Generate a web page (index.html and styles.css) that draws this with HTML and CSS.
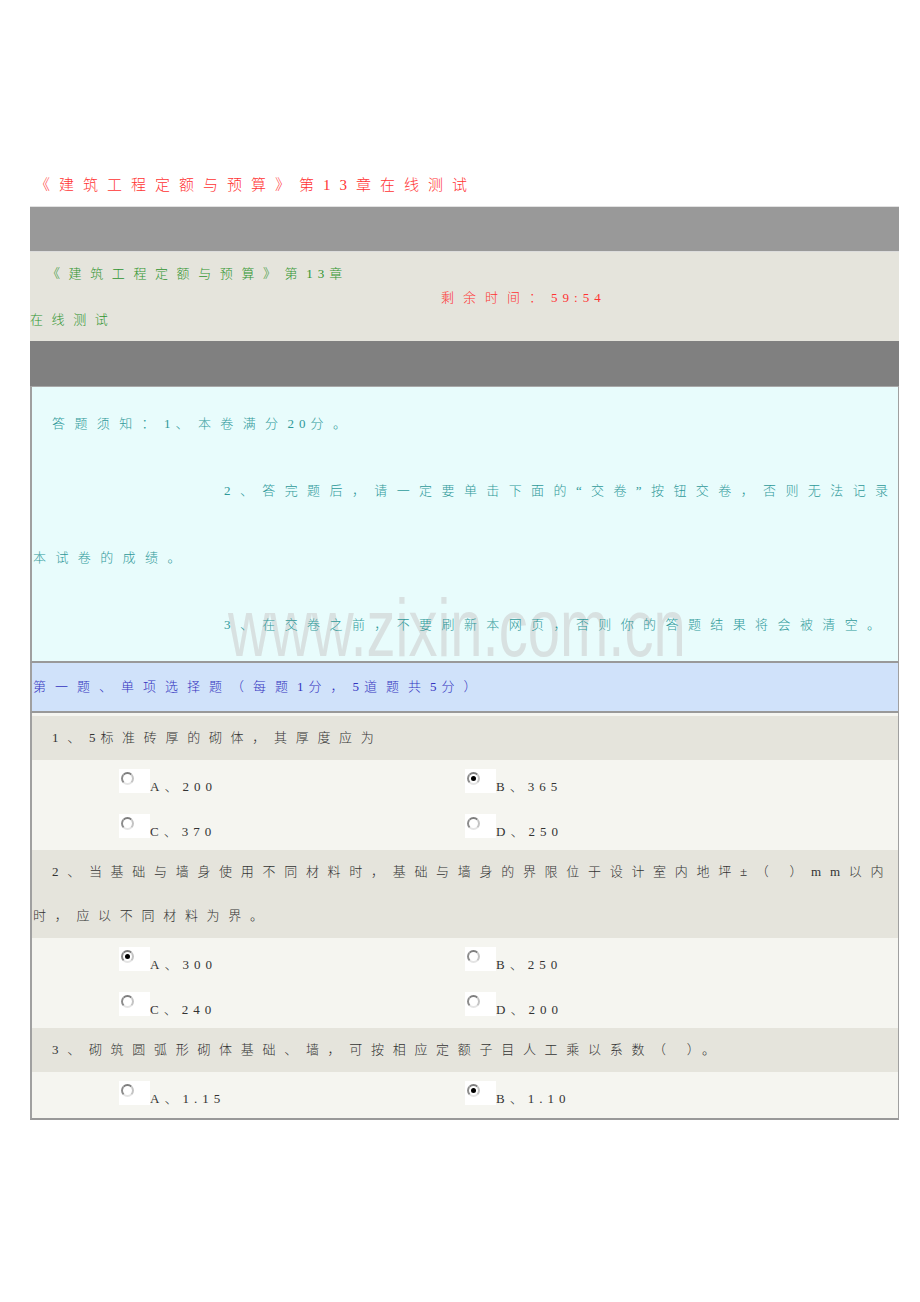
FILE: index.html
```html
<!DOCTYPE html>
<html lang="zh-CN">
<head>
<meta charset="utf-8">
<title>《建筑工程定额与预算》第13章在线测试</title>
<link rel="stylesheet" href="styles.css">
</head>
<body>
<div class="page">
  <h1 class="title">《建筑工程定额与预算》第<span class="tnum">13</span>章在线测试</h1>
  <div class="frame">
    <div class="bar bar-light"></div>
    <div class="head">
      <div class="head-left"><span class="head-indent">《建筑工程定额与预算》第<span class="num">13</span>章</span><br>在线测试</div>
      <div class="timer">剩余时间：<span class="num">59:54</span></div>
    </div>
    <div class="bar bar-dark"></div>
    <div class="notice">
      <div class="watermark" aria-hidden="true">www.zixin.com.cn</div>
      <p class="n1">答题须知：<span class="num">1</span>、本卷满分<span class="num">20</span>分。</p>
      <p class="n2">2、答完题后，请一定要单击下面的“交卷”按钮交卷，否则无法记录<br>本试卷的成绩。</p>
      <p class="n2">3、在交卷之前，不要刷新本网页，否则你的答题结果将会被清空。</p>
    </div>
    <div class="section-head">第一题、单项选择题（每题<span class="num">1</span>分，<span class="num">5</span>道题共<span class="num">5</span>分）</div>
    <div class="questions">
      <div class="stem">1、<span class="num">5</span>标准砖厚的砌体，其厚度应为</div>
      <div class="opts">
        <div class="opt-row">
          <label class="opt"><span class="radio-box"><span class="radio"></span></span><span class="opt-text">A、200</span></label>
          <label class="opt"><span class="radio-box"><span class="radio on"></span></span><span class="opt-text">B、365</span></label>
        </div>
        <div class="opt-row">
          <label class="opt"><span class="radio-box"><span class="radio"></span></span><span class="opt-text">C、370</span></label>
          <label class="opt"><span class="radio-box"><span class="radio"></span></span><span class="opt-text">D、250</span></label>
        </div>
      </div>
      <div class="stem">2、当基础与墙身使用不同材料时，基础与墙身的界限位于设计室内地坪±（ ）mm以内<br>时，应以不同材料为界。</div>
      <div class="opts">
        <div class="opt-row">
          <label class="opt"><span class="radio-box"><span class="radio on"></span></span><span class="opt-text">A、300</span></label>
          <label class="opt"><span class="radio-box"><span class="radio"></span></span><span class="opt-text">B、250</span></label>
        </div>
        <div class="opt-row">
          <label class="opt"><span class="radio-box"><span class="radio"></span></span><span class="opt-text">C、240</span></label>
          <label class="opt"><span class="radio-box"><span class="radio"></span></span><span class="opt-text">D、200</span></label>
        </div>
      </div>
      <div class="stem">3、砌筑圆弧形砌体基础、墙，可按相应定额子目人工乘以系数（ ）。</div>
      <div class="opts">
        <div class="opt-row last">
          <label class="opt"><span class="radio-box"><span class="radio"></span></span><span class="opt-text">A、1.15</span></label>
          <label class="opt"><span class="radio-box"><span class="radio on"></span></span><span class="opt-text">B、1.10</span></label>
        </div>
      </div>
    </div>
  </div>
</div>
</body>
</html>
```

FILE: styles.css
```css
html, body {
  margin: 0;
  padding: 0;
  background: #ffffff;
}

body {
  font-family: "Liberation Serif", "Noto Sans CJK SC", serif;
  font-weight: 300;
  font-size: 13px;
  color: #333333;
}

.page {
  width: 920px;
  padding-top: 175px;
}

.title {
  margin: 0 0 0 35px;
  font-size: 15px;
  line-height: 20px;
  font-weight: 300;
  letter-spacing: 9px;
  color: #ff3333;
  white-space: nowrap;
}

.frame {
  width: 869px;
  margin: 11px 0 0 30px;
  border-top: 1px solid #e2e2e2;
}

.bar {
  height: 44px;
}

.bar-light {
  background: #999999;
  border-bottom: 1px solid #dcdcdc;
}

.bar-dark {
  height: 45px;
  background: #808080;
}

.head {
  height: 89px;
  background: #e5e4dc;
  display: flex;
  align-items: center;
}

.head-left {
  flex: 0 0 411px;
  color: #2f942f;
  line-height: 46px;
  letter-spacing: 8.6px;
  white-space: nowrap;
}

.head-indent {
  padding-left: 17px;
}

.timer {
  color: #ff3333;
  letter-spacing: 9px;
  white-space: nowrap;
}

.num {
  letter-spacing: 5px;
}

.notice {
  position: relative;
  overflow: hidden;
  background: #e8fcfc;
  border-top: 1px solid #a8a8a8;
  border-left: 2px solid #a0a0a0;
  border-right: 1px solid #a0a0a0;
  border-bottom: 2px solid #999999;
  padding: 3px 0 3px 1px;
  color: #2f9999;
  letter-spacing: 9.4px;
}

.notice p {
  position: relative;
  margin: 0;
  line-height: 67px;
  white-space: nowrap;
}

.n1 {
  text-indent: 19px;
}

.n2 {
  text-indent: 191px;
}

.watermark {
  position: absolute;
  left: 196px;
  top: 220px;
  font-family: "Liberation Sans", sans-serif;
  font-size: 58px;
  line-height: 1;
  letter-spacing: 0;
  color: #d8e1e1;
  transform: scaleY(1.4);
  transform-origin: 0 48px;
  white-space: nowrap;
  pointer-events: none;
}

.section-head {
  height: 48px;
  line-height: 48px;
  background: #d0e2fa;
  border-left: 2px solid #a0a0a0;
  border-right: 1px solid #a0a0a0;
  border-bottom: 2px solid #999999;
  padding-left: 1px;
  color: #3434c0;
  letter-spacing: 9px;
  white-space: nowrap;
}

.questions {
  background: #f5f5f0;
  border-left: 2px solid #a0a0a0;
  border-right: 1px solid #a0a0a0;
  border-bottom: 2px solid #999999;
  padding-top: 3px;
}

.stem {
  background: #e5e4dc;
  line-height: 44px;
  padding-left: 1px;
  text-indent: 19px;
  letter-spacing: 8.7px;
  white-space: nowrap;
  color: #333333;
}

.opt-row {
  height: 45px;
  padding-left: 87px;
  display: grid;
  grid-template-columns: 346px 346px;
  align-items: start;
}

.opt-row.last {
  height: 46px;
}

.opt {
  margin-top: 9px;
  display: flex;
  align-items: flex-end;
}

.radio-box {
  position: relative;
  flex: none;
  width: 31px;
  height: 24px;
  background: #ffffff;
}

.radio {
  position: absolute;
  left: 2px;
  top: 3px;
  width: 9px;
  height: 9px;
  border: 2px solid;
  border-color: #7e7e7e #c4c4c4 #e4e4e4 #8c8c8c;
  border-radius: 50%;
}

.radio.on::after {
  content: "";
  position: absolute;
  left: 2px;
  top: 2px;
  width: 5px;
  height: 5px;
  border-radius: 50%;
  background: #000000;
}

.opt-text {
  line-height: 14px;
  margin-bottom: -1px;
  letter-spacing: 5px;
  white-space: nowrap;
  color: #333333;
}
```
